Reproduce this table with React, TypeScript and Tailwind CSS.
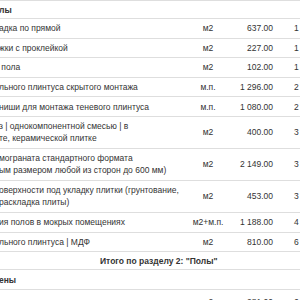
import React from "react";

type Row = {
  d: React.ReactNode;
  u?: string;
  q?: string;
  n?: string;
  kind?: "item" | "section" | "total";
  two?: boolean;
  tall?: boolean;
  last?: boolean;
};

const rows: Row[] = [
  { d: "лы", kind: "section" },
  { d: "адка по прямой", u: "м2", q: "637.00", n: "1" },
  { d: "жки с проклейкой", u: "м2", q: "227.00", n: "1" },
  { d: "\u00a0пола", u: "м2", q: "102.00", n: "1" },
  { d: "льного плинтуса скрытого монтажа", u: "м.п.", q: "1 296.00", n: "2" },
  { d: "ниши для монтажа теневого плинтуса", u: "м.п.", q: "1 080.00", n: "2" },
  {
    d: (
      <>
        з | однокомпонентной смесью | в
        <br />
        те, керамической плитке
      </>
    ),
    u: "м2",
    q: "400.00",
    n: "3",
    two: true,
  },
  {
    d: (
      <>
        мограната стандартного формата
        <br />
        ым размером любой из сторон до 600 мм)
      </>
    ),
    u: "м2",
    q: "2 149.00",
    n: "3",
    two: true,
  },
  {
    d: (
      <>
        оверхности под укладку плитки (грунтование,
        <br />
        раскладка плиты)
      </>
    ),
    u: "м2",
    q: "453.00",
    n: "3",
    two: true,
  },
  { d: "ия полов в мокрых помещениях", u: "м2+м.п.", q: "1 188.00", n: "4" },
  { d: "льного плинтуса | МДФ", u: "м2", q: "810.00", n: "6" },
  { d: "Итого по разделу 2: \"Полы\"", kind: "total" },
  { d: "ены", kind: "section", tall: true },
  { d: "ка стен по маякам", u: "м2", q: "281.00", n: "6", last: true },
];

export default function App() {
  return (
    <div
      className="w-[300px] h-[300px] overflow-hidden bg-white text-[#333] text-[8.5px] leading-[12px]"
      style={{ fontFamily: '"Liberation Sans", Arial, sans-serif' }}
    >
      <div className="h-[1px] bg-[#f4f4f4] border-b border-[#dedede]" />
      {rows.map((r, i) => {
        if (r.kind === "section") {
          return (
            <div
              key={i}
              className={
                r.tall
                  ? "border-b border-[#dedede] py-[3.5px] font-bold whitespace-nowrap"
                  : "border-b border-[#dedede] py-[2.5px] font-bold whitespace-nowrap"
              }
            >
              <span className="ml-[-1px]">{r.d}</span>
            </div>
          );
        }
        if (r.kind === "total") {
          return (
            <div
              key={i}
              className="border-b border-[#dedede] py-[2.5px] pl-[100px] font-bold whitespace-nowrap"
            >
              {r.d}
            </div>
          );
        }
        const cls = r.two
          ? "grid grid-cols-[180px_56px_47px_1fr] items-center border-b border-[#dedede] py-[3.5px] whitespace-nowrap"
          : r.last
          ? "grid grid-cols-[180px_56px_47px_1fr] items-center border-b border-[#dedede] pt-[5.5px] pb-[3.3px] whitespace-nowrap"
          : "grid grid-cols-[180px_56px_47px_1fr] items-center border-b border-[#dedede] py-[3.3px] whitespace-nowrap";
        return (
          <div key={i} className={cls}>
            <div className="overflow-hidden ml-[-1px]">{r.d}</div>
            <div className="text-center">{r.u}</div>
            <div className="text-right pr-[10px]">{r.q}</div>
            <div className="pl-[11px]">{r.n}</div>
          </div>
        );
      })}
    </div>
  );
}
